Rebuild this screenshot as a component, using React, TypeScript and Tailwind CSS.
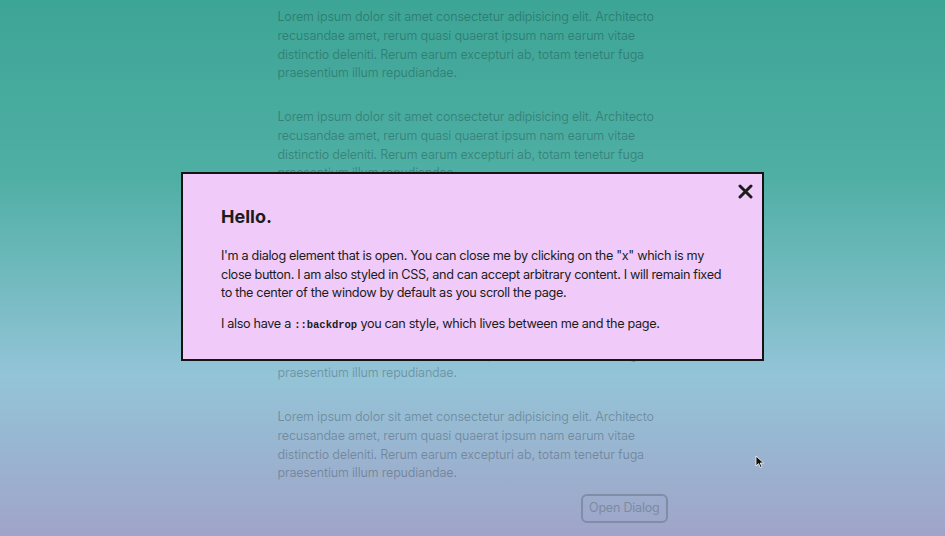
import React from 'react';

const lines = [
  'Lorem ipsum dolor sit amet consectetur adipisicing elit. Architecto',
  'recusandae amet, rerum quasi quaerat ipsum nam earum vitae',
  'distinctio deleniti. Rerum earum excepturi ab, totam tenetur fuga',
  'praesentium illum repudiandae.',
];

const font = { fontFamily: 'Inter, "Noto Sans", sans-serif' };

function Lorem() {
  return (
    <p className="mb-[25px] whitespace-nowrap text-[12.5px] leading-[18.75px] tracking-[-0.2px] text-black/25">
      {lines.map((l, i) => (
        <React.Fragment key={i}>
          {l}
          {i < lines.length - 1 && <br />}
        </React.Fragment>
      ))}
    </p>
  );
}

export default function App() {
  return (
    <div
      className="relative h-[536px] w-[945px] overflow-hidden"
      style={{ ...font, background: 'linear-gradient(180deg,#3da596 0%,#4fafa4 33%,#93c4d8 70%,#a0a4c8 100%)' }}
    >
      <div className="mx-auto w-[390px] pt-[8px]">
        <Lorem />
        <Lorem />
        <Lorem />
        <Lorem />
        <Lorem />
        <div className="-mt-[14px] flex justify-end">
          <button className="h-[29px] rounded-[6px] border-2 border-[#7d8ea6] px-[6px] text-[12.5px] tracking-[-0.2px] text-[#7b8ba2]">
            Open Dialog
          </button>
        </div>
      </div>

      <div className="absolute left-[181px] top-[172px] w-[583px] border-2 border-[#141414] bg-[#f0cbfa] px-[38px] pb-[25px] pt-[29px] text-[#1c1c1c]">
        <button className="absolute right-[7px] top-[7px] flex h-[20px] w-[20px] items-center justify-center">
          <svg width="15" height="15" viewBox="0 0 15 15">
            <path d="M2 2 L13 13 M13 2 L2 13" stroke="#1c1c1c" strokeWidth="3" strokeLinecap="round" />
          </svg>
        </button>
        <h2 className="mb-[17px] text-[18px] font-bold leading-[27px]">Hello.</h2>
        <div className="whitespace-nowrap text-[12.7px] leading-[18.6px] tracking-[-0.35px]">
          <p className="mb-[12px]">
            I'm a dialog element that is open. You can close me by clicking on the "x" which is my
            <br />
            close button. I am also styled in CSS, and can accept arbitrary content. I will remain fixed
            <br />
            to the center of the window by default as you scroll the page.
          </p>
          <p>
            I also have a{' '}
            <code className="text-[10.5px] font-bold tracking-normal" style={{ fontFamily: '"Liberation Mono", monospace' }}>
              ::backdrop
            </code>{' '}
            you can style, which lives between me and the page.
          </p>
        </div>
      </div>

      <svg className="absolute left-[755px] top-[455px]" width="10" height="14" viewBox="0 0 10 14">
        <path d="M1 1 L1 11 L3.5 8.6 L5.4 12.6 L7 11.9 L5.2 8 L8.6 8 Z" fill="#111" stroke="#fff" strokeWidth="0.8" />
      </svg>
    </div>
  );
}
